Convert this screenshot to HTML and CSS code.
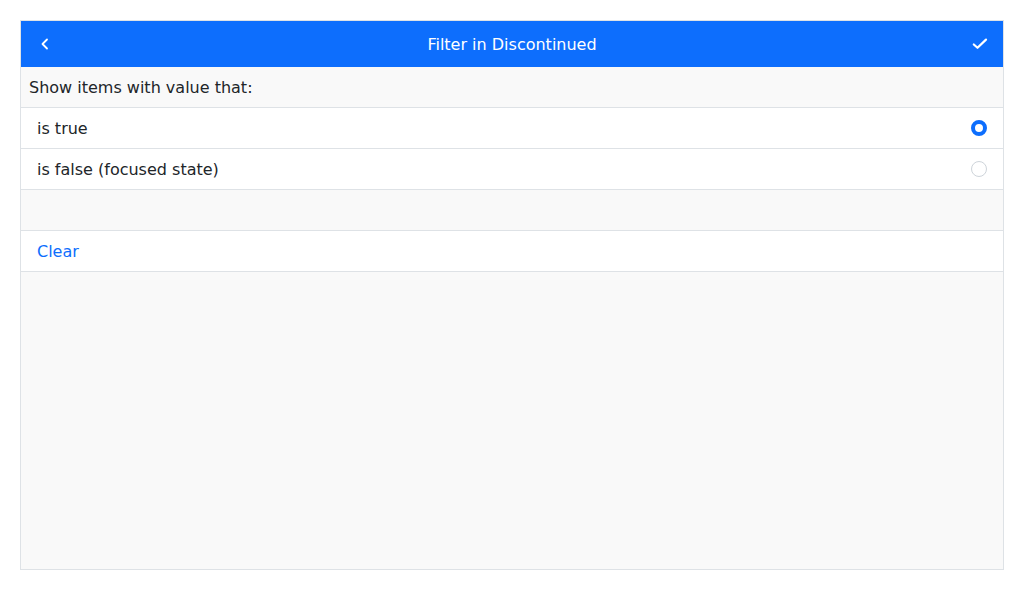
FILE: index.html
```html
<!DOCTYPE html>
<html>
<head>
<meta charset="utf-8">
<link rel="stylesheet" href="styles.css">
</head>
<body>
<div class="panel">
  <div class="header">
    <span class="back">
      <svg width="16" height="16" viewBox="0 0 16 16"><path d="M11 3.5 L6.5 8 L11 12.5" fill="none" stroke="#fff" stroke-width="1.8" stroke-linecap="round" stroke-linejoin="round"/></svg>
    </span>
    <span class="title">Filter in Discontinued</span>
    <span class="ok">
      <svg width="18" height="18" viewBox="0 0 18 18"><path d="M3.8 9.5 L7.5 12.8 L16 4.6" fill="none" stroke="#fff" stroke-width="2.2" stroke-linecap="round" stroke-linejoin="round"/></svg>
    </span>
  </div>
  <div class="label">Show items with value that:</div>
  <div class="row">
    <span>is true</span>
    <span class="radio checked"></span>
  </div>
  <div class="row">
    <span>is false (focused state)</span>
    <span class="radio"></span>
  </div>
  <div class="spacer"></div>
  <div class="row clear">Clear</div>
</div>
</body>
</html>
```

FILE: styles.css
```css
* { box-sizing: border-box; }
html, body { margin: 0; padding: 0; background: #fff; }
body {
  padding: 20px;
  font-family: "DejaVu Sans", sans-serif;
  font-size: 16px;
  color: #212529;
}
.panel {
  width: 984px;
  height: 550px;
  border: 1px solid #dee2e6;
  background: #f9f9f9;
  display: flex;
  flex-direction: column;
}
.header {
  height: 46px;
  background: #0d6efd;
  color: #fff;
  display: flex;
  align-items: center;
  justify-content: space-between;
  padding: 0 15px;
}
.back, .ok { display: flex; align-items: center; width: 20px; }
.ok { justify-content: flex-end; }
.title { font-size: 16px; }
.label {
  height: 41px;
  padding: 0 8px;
  display: flex;
  align-items: center;
  border-bottom: 1px solid #dee2e6;
}
.row {
  height: 41px;
  padding: 0 16px;
  background: #fff;
  display: flex;
  align-items: center;
  justify-content: space-between;
  border-bottom: 1px solid #dee2e6;
}
.spacer {
  height: 41px;
  border-bottom: 1px solid #dee2e6;
}
.clear { color: #0d6efd; }
.radio {
  width: 16px;
  height: 16px;
  border-radius: 50%;
  border: 1px solid #ced4da;
  background: #fff;
}
.radio.checked {
  border: 4.5px solid #0d6efd;
  background: #fff;
}
```
